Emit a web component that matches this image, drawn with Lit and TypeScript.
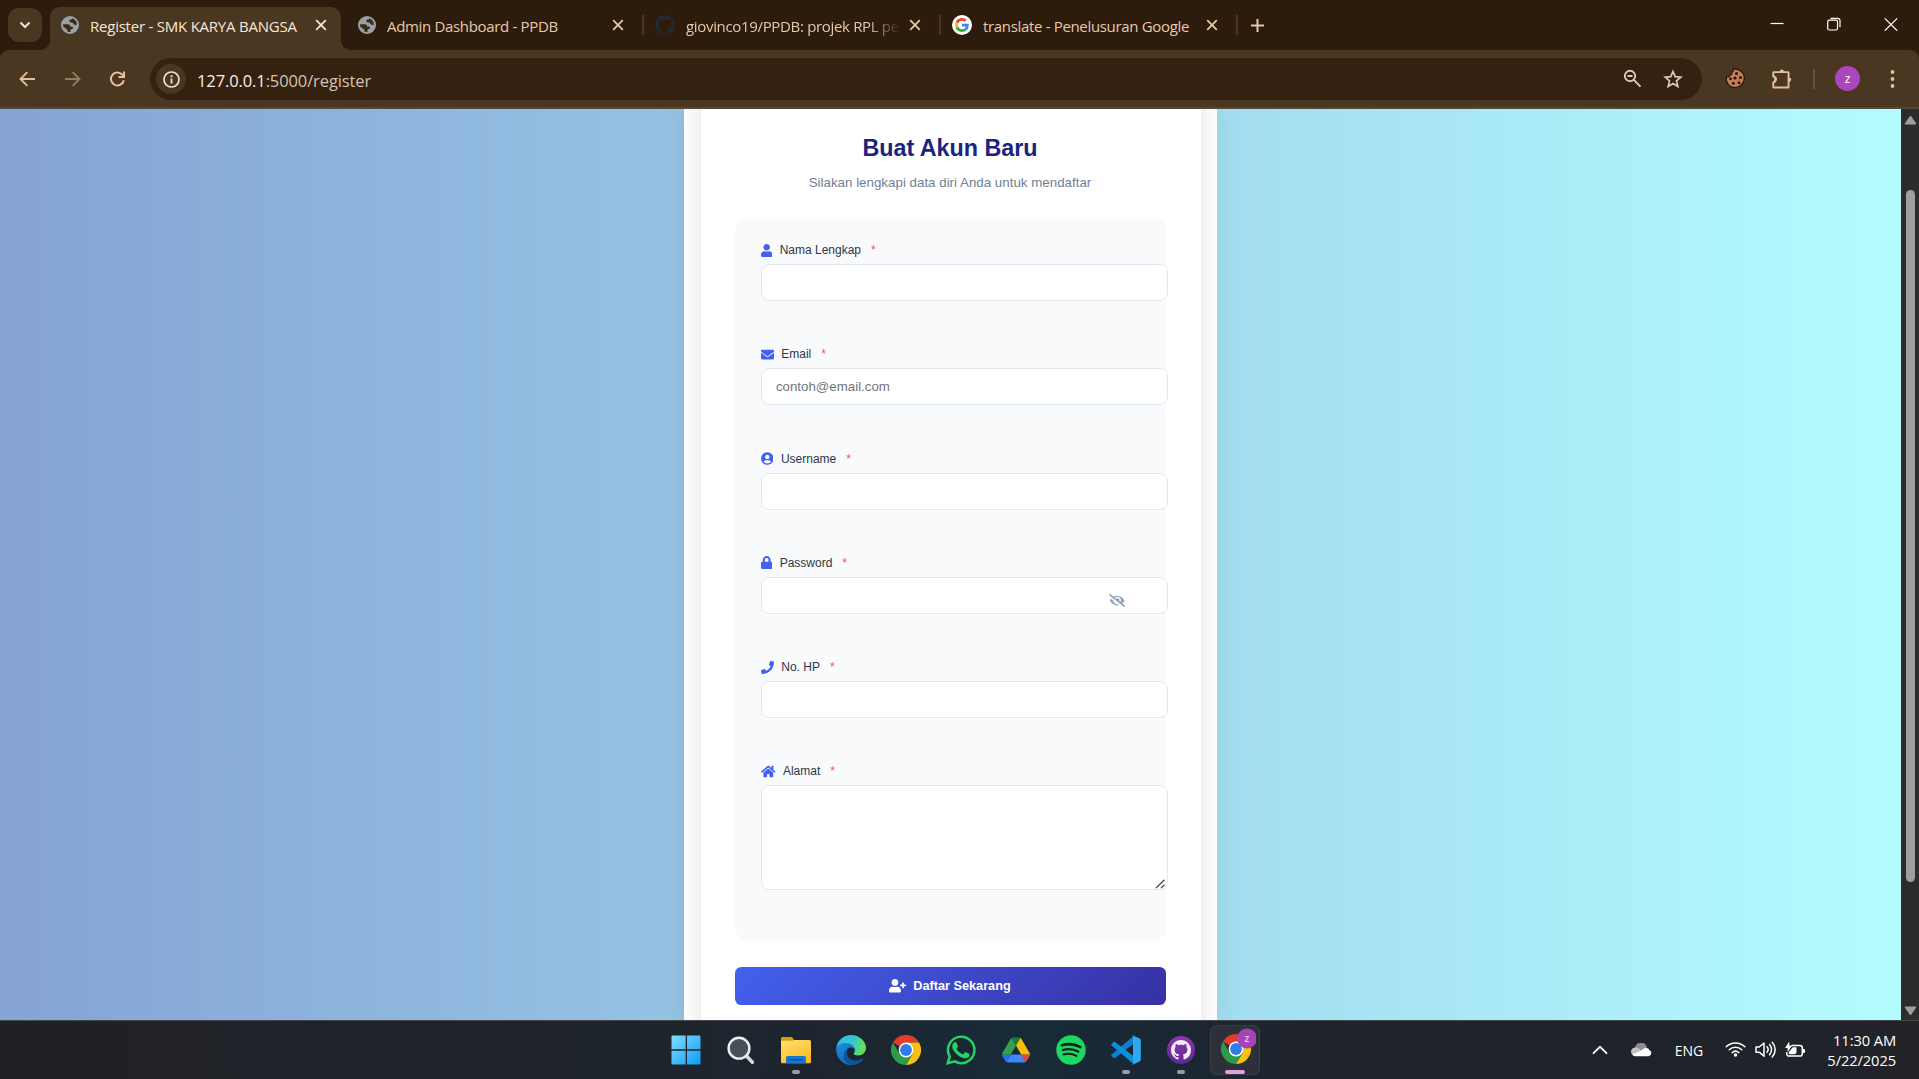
import { LitElement, html, svg, css } from "lit";
import { customElement } from "lit/decorators.js";

const fa = (name: string, h: number) => {
  const [w, d] = FA[name];
  return html`<svg class="fa" width=${(w / 512) * h} height=${h} viewBox="0 0 ${w} 512"><path fill="currentColor" d=${d}></path></svg>`;
};

const FA: Record<string, [number, string]> = {
  user: [448, "M224 256c70.7 0 128-57.3 128-128S294.7 0 224 0 96 57.3 96 128s57.3 128 128 128zm89.6 32h-16.7c-22.2 10.2-46.9 16-72.9 16s-50.6-5.8-72.9-16h-16.7C60.2 288 0 348.2 0 422.4V464c0 26.5 21.5 48 48 48h352c26.5 0 48-21.5 48-48v-41.6c0-74.2-60.2-134.4-134.4-134.4z"],
  envelope: [512, "M502.3 190.8c3.9-3.1 9.7-.2 9.7 4.7V400c0 26.5-21.5 48-48 48H48c-26.5 0-48-21.5-48-48V195.6c0-5 5.7-7.8 9.7-4.7 22.4 17.4 52.1 39.5 154.1 113.6 21.1 15.4 56.7 47.8 92.2 47.6 35.7.3 72-32.8 92.3-47.6 102-74.1 131.6-96.3 154-113.7zM256 320c23.2.4 56.6-29.2 73.4-41.4 132.7-96.3 142.8-104.7 173.4-128.7 5.8-4.5 9.2-11.5 9.2-18.9v-19c0-26.5-21.5-48-48-48H48c-26.5 0-48 21.5-48 48v19c0 7.4 3.4 14.3 9.2 18.9 30.6 23.9 40.7 32.4 173.4 128.7 16.8 12.2 50.2 41.8 73.4 41.4z"],
  circle: [496, "M248 8C111 8 0 119 0 256s111 248 248 248 248-111 248-248S385 8 248 8zm0 96c48.6 0 88 39.4 88 88s-39.4 88-88 88-88-39.4-88-88 39.4-88 88-88zm0 344c-58.7 0-111.3-26.6-146.5-68.2 18.8-35.4 55.6-59.8 98.5-59.8 2.4 0 4.8.4 7.1 1.1 13 4.2 26.6 6.9 40.9 6.9 14.3 0 28-2.7 40.9-6.9 2.3-.7 4.7-1.1 7.1-1.1 42.9 0 79.7 24.4 98.5 59.8C359.3 421.4 306.7 448 248 448z"],
  lock: [448, "M400 224h-24v-72C376 68.2 307.8 0 224 0S72 68.2 72 152v72H48c-26.5 0-48 21.5-48 48v192c0 26.5 21.5 48 48 48h352c26.5 0 48-21.5 48-48V272c0-26.5-21.5-48-48-48zm-104 0H152v-72c0-39.7 32.3-72 72-72s72 32.3 72 72v72z"],
  phone: [512, "M493.4 24.6l-104-24c-11.3-2.6-22.9 3.3-27.5 13.9l-48 112c-4.2 9.8-1.4 21.3 6.9 28l60.6 49.6c-36 76.7-98.9 140.5-177.2 177.2l-49.6-60.6c-6.8-8.3-18.2-11.1-28-6.9l-112 48C3.9 366.5-2 378.1.6 389.4l24 104C27.1 504.2 36.7 512 48 512c256.1 0 464-207.5 464-464 0-11.2-7.7-20.9-18.6-23.4z"],
  home: [576, "M280.37 148.26L96 300.11V464a16 16 0 0 0 16 16l112.06-.29a16 16 0 0 0 15.92-16V368a16 16 0 0 1 16-16h64a16 16 0 0 1 16 16v95.64a16 16 0 0 0 16 16.05L464 480a16 16 0 0 0 16-16V300L295.67 148.26a12.19 12.19 0 0 0-15.3 0zM571.6 251.47L488 182.56V44.05a12 12 0 0 0-12-12h-56a12 12 0 0 0-12 12v72.61L318.47 43a48 48 0 0 0-61 0L4.34 251.47a12 12 0 0 0-1.6 16.9l25.5 31A12 12 0 0 0 45.15 301l235.22-193.74a12.19 12.19 0 0 1 15.3 0L530.9 301a12 12 0 0 0 16.9-1.6l25.5-31a12 12 0 0 0-1.7-16.93z"],
  eyeSlash: [640, "M320 400c-75.85 0-137.25-58.71-142.9-133.11L72.2 185.82c-13.79 17.3-26.48 35.59-36.72 55.59a32.35 32.35 0 0 0 0 29.19C89.71 376.41 197.07 448 320 448c26.91 0 52.87-4 77.89-10.46L346 397.39a144.13 144.13 0 0 1-26 2.61zm313.82 58.1l-110.55-85.44a331.25 331.25 0 0 0 81.25-102.07 32.35 32.35 0 0 0 0-29.19C550.29 135.59 442.93 64 320 64a308.15 308.15 0 0 0-147.32 37.7L45.46 3.37A16 16 0 0 0 23 6.18L3.37 31.45A16 16 0 0 0 6.18 53.9l588.36 454.73a16 16 0 0 0 22.46-2.81l19.64-25.27a16 16 0 0 0-2.82-22.45zm-183.72-142l-39.3-30.38A94.75 94.75 0 0 0 416 256a94.76 94.76 0 0 0-121.31-92.21A47.65 47.65 0 0 1 304 192a46.64 46.64 0 0 1-1.54 10l-73.61-56.89A142.31 142.31 0 0 1 320 112a143.92 143.92 0 0 1 144 144c0 21.63-5.29 41.79-13.9 60.11z"],
  userPlus: [640, "M624 208h-64v-64c0-8.8-7.2-16-16-16h-32c-8.8 0-16 7.2-16 16v64h-64c-8.8 0-16 7.2-16 16v32c0 8.8 7.2 16 16 16h64v64c0 8.8 7.2 16 16 16h32c8.8 0 16-7.2 16-16v-64h64c8.8 0 16-7.2 16-16v-32c0-8.8-7.2-16-16-16zm-400 48c70.7 0 128-57.3 128-128S294.7 0 224 0 96 57.3 96 128s57.3 128 128 128zm89.6 32h-16.7c-22.2 10.2-46.9 16-72.9 16s-50.6-5.8-72.9-16h-16.7C60.2 288 0 348.2 0 422.4V464c0 26.5 21.5 48 48 48h352c26.5 0 48-21.5 48-48v-41.6c0-74.2-60.2-134.4-134.4-134.4z"],
};

const githubMark = "M8 0C3.58 0 0 3.58 0 8c0 3.54 2.29 6.53 5.47 7.59.4.07.55-.17.55-.38 0-.19-.01-.82-.01-1.49-2.01.37-2.53-.49-2.69-.94-.09-.23-.48-.94-.82-1.13-.28-.15-.68-.52-.01-.53.63-.01 1.08.58 1.23.82.72 1.21 1.87.87 2.33.66.07-.52.28-.87.51-1.07-1.78-.2-3.64-.89-3.64-3.95 0-.87.31-1.59.82-2.15-.08-.2-.36-1.02.08-2.12 0 0 .67-.21 2.2.82.64-.18 1.32-.27 2-.27s1.36.09 2 .27c1.53-1.04 2.2-.82 2.2-.82.44 1.1.16 1.92.08 2.12.51.56.82 1.27.82 2.15 0 3.07-1.87 3.75-3.65 3.95.29.25.54.73.54 1.48 0 1.07-.01 1.93-.01 2.2 0 .21.15.46.55.38A8.01 8.01 0 0 0 16 8c0-4.42-3.58-8-8-8z";

const globe = html`<svg width="18" height="18" viewBox="0 0 18 18"><circle cx="9" cy="9" r="9" fill="#9aa0a6"></circle><path fill="#3a2a1a" d="M2.200 8.300h4.600c1.500 0 2.300.8 2.300 2.100h1.700c1.500 0 1.500 2.100.2 2.600-1.300.4-1.600 1-1.600 2v1C5.400 16 2 13 2 9.200zM11.300 2.300c2.700 1 4.600 3.500 4.700 6.400h-1.800c-1 0-1.600-.4-2-1.300-.3-.8-.9-1-1.900-1-1.400 0-2-.5-2-1.400 0-1.100.7-1.600 1.900-1.600.8 0 1.200-.3 1.100-1.100z"></path><path fill="#9aa0a6" d="M2 10.200l4.300 3.600c.5.500.4 1.300 0 1.900C4 15 2 13 2 10.200z"></path></svg>`;
const github = html`<svg width="20" height="20" viewBox="0 0 16 16"><path fill="#24292f" d=${githubMark}></path></svg>`;
const google = html`<svg width="20" height="20" viewBox="0 0 20 20"><circle cx="10" cy="10" r="10" fill="#fff"></circle><g transform="translate(3 3) scale(.2917)"><path fill="#EA4335" d="M24 9.5c3.54 0 6.71 1.22 9.21 3.6l6.85-6.85C35.9 2.38 30.47 0 24 0 14.62 0 6.51 5.38 2.56 13.22l7.98 6.19C12.43 13.72 17.74 9.5 24 9.5z"></path><path fill="#4285F4" d="M46.98 24.55c0-1.57-.15-3.09-.38-4.55H24v9.02h12.94c-.58 2.96-2.26 5.48-4.78 7.18l7.73 6c4.51-4.18 7.09-10.36 7.09-17.65z"></path><path fill="#FBBC05" d="M10.53 28.59c-.48-1.45-.76-2.99-.76-4.59s.27-3.14.76-4.59l-7.98-6.19C.92 16.46 0 20.12 0 24c0 3.88.92 7.54 2.56 10.78l7.97-6.19z"></path><path fill="#34A853" d="M24 48c6.48 0 11.93-2.13 15.89-5.81l-7.73-6c-2.15 1.45-4.92 2.3-8.16 2.3-6.26 0-11.57-4.22-13.47-9.91l-7.98 6.19C6.51 42.62 14.62 48 24 48z"></path></g></svg>`;
const cross = html`<svg class="x" width="12" height="12" viewBox="0 0 12 12"><path fill="none" stroke="currentColor" stroke-width="1.8" d="M1.2 1.2l9.6 9.6M10.8 1.2l-9.6 9.6"></path></svg>`;

const chromeParts = svg`
  <path fill="#e33b2e" d="M15 15L2 7.5A15 15 0 0 1 28 7.5H15z"></path>
  <path fill="#f9c013" d="M28 7.5A15 15 0 0 1 15 30L21.5 18.7L15 7.5z"></path>
  <path fill="#2c9c4b" d="M2 7.5A15 15 0 0 0 15 30L21.5 18.8L8.5 18.8z"></path>
  <circle cx="15" cy="15" r="7.4" fill="#fff"></circle><circle cx="15" cy="15" r="5.9" fill="#2f7bea"></circle>`;

const taskIcons = {
  windows: html`<svg width="30" height="30" viewBox="0 0 30 30"><defs><linearGradient id="w" x1="0" y1="0" x2="1" y2="1"><stop offset="0" stop-color="#7fe0ff"></stop><stop offset="1" stop-color="#0f9bf5"></stop></linearGradient></defs><path fill="url(#w)" d="M1.5.5H15v14H.5v-13a1 1 0 0 1 1-1zM16 .5h12.500a1 1 0 0 1 1 1v13H16zM.5 15.500H15v14H1.500a1 1 0 0 1-1-1zM16 15.500h13.500v13a1 1 0 0 1-1 1H16z"></path><path stroke="#1d2733" d="M15.200 0v30M0 15h30"></path></svg>`,
  search: html`<svg width="30" height="30" viewBox="0 0 30 30"><path stroke="#d7d9db" stroke-width="3.6" stroke-linecap="round" d="M20 20.500l6.400 6.700"></path><circle cx="13" cy="13.200" r="10.400" fill="#48515a" stroke="#f0f1f2" stroke-width="2.400"></circle></svg>`,
  folder: html`<svg width="30" height="30" viewBox="0 0 30 30"><defs><linearGradient id="f" x1="0" y1="0" x2="0.600" y2="1"><stop offset="0" stop-color="#ffe070"></stop><stop offset="1" stop-color="#fcbc26"></stop></linearGradient></defs><path fill="#dc9a06" d="M0 8V3.500a1.500 1.500 0 0 1 1.500-1.500H9.800c1.200 0 1.700.500 2.300 1.400l.8 1.600V8z"></path><path fill="url(#f)" d="M0 5.800h10.500c1.500 0 2-.8 3-.8H28.500a1.500 1.500 0 0 1 1.500 1.500V27a1.200 1.200 0 0 1-1.200 1.200H1.200A1.200 1.200 0 0 1 0 27z"></path><path fill="#1579cf" d="M5 28.200V23a2 2 0 0 1 2-2h16a2 2 0 0 1 2 2v5.200z"></path><path stroke="#0a4a8c" stroke-width="1.200" d="M8.500 24.800h13"></path></svg>`,
  edge: html`<svg width="30" height="30" viewBox="0 0 30 30"><defs><linearGradient id="e1" x1="0" y1="0" x2="1" y2=".3"><stop offset="0" stop-color="#35b7ee"></stop><stop offset=".6" stop-color="#37c6d0"></stop><stop offset="1" stop-color="#63e05a"></stop></linearGradient><linearGradient id="e2" x1="0" y1="0" x2=".8" y2="1"><stop offset="0" stop-color="#1f8fdc"></stop><stop offset="1" stop-color="#0a63b8"></stop></linearGradient></defs><path fill="url(#e1)" d="M.4 12C1.800 5 7.800 0 15 0c8.700 0 15 6.500 15 12.800 0 4.800-3.600 7.700-8 7.700-2.500 0-4.300-.7-4.300-1.700 0-.8 1.200-1.300 1.200-3.600C18.900 12 15.500 9 10.500 9 5.500 9 2 10.500.4 12z"></path><path fill="url(#e2)" d="M.3 12C2.300 9.300 6 8 9.500 8c5.200 0 9.300 3 9.500 6.900-.6-1.500-2-2.500-4-2.500-3 0-5 2.700-5 6 0 5.300 4.500 9.500 10 10A15 15 0 0 1 15 30C6.500 30-.9 22 .3 12z"></path><path fill="#11539b" d="M11.500 14.200c-2 4.200.6 11.300 8 11.300 3.600 0 6-1.500 7-1.700.8-.1 1 .5.600 1.100A15 15 0 0 1 17 29.900C11 29.500 6.800 24.500 8 19c.5-2.200 1.900-4 3.500-4.800z"></path></svg>`,
  chrome: html`<svg width="30" height="30" viewBox="0 0 30 30">${chromeParts}</svg>`,
  whatsapp: html`<svg width="30" height="30" viewBox="0 0 30 30"><path fill="none" stroke="#25d366" stroke-width="2.500" d="M1.800 28.200l1.900-6.900A13.200 13.200 0 1 1 8.800 26.400z"></path><path fill="#25d366" d="M10.700 7.900c-.3-.7-.6-.7-1-.7h-.8c-.3 0-.8.100-1.200.6C7.300 8.200 6.200 9.300 6.200 11.400s1.500 4.100 1.700 4.400c.2.300 3 4.700 7.300 6.400 3.600 1.400 4.300 1.100 5.100 1 .8-.1 2.500-1 2.900-2s.4-1.900.3-2c-.1-.2-.4-.3-.9-.6s-2.500-1.300-2.900-1.400c-.4-.2-.7-.2-1 .2s-1.100 1.400-1.400 1.700c-.2.300-.5.300-.9.100-.4-.2-1.800-.7-3.400-2.100-1.300-1.100-2.100-2.500-2.400-2.900-.2-.4 0-.7.200-.9l.7-.8c.2-.3.300-.4.400-.7.100-.3.100-.5 0-.8-.1-.2-1-2.300-1.200-3.100z"></path></svg>`,
  drive: html`<svg width="28" height="26" viewBox="0 0 87.300 78"><path fill="#2a6ff0" d="M6.600 66.850l3.850 6.650c.8 1.400 1.950 2.500 3.300 3.300l13.750-23.800H0c0 1.550.4 3.100 1.200 4.500z"></path><path fill="#34a04e" d="M43.650 25L29.900 1.200c-1.350.8-2.500 1.900-3.300 3.300L1.200 48.500A9 9 0 0 0 0 53h27.500z"></path><path fill="#e8453c" d="M73.550 76.800c1.350-.8 2.500-1.900 3.300-3.300l1.600-2.750L86.100 57.500c.8-1.400 1.200-2.950 1.200-4.500H59.800l5.850 11.500z"></path><path fill="#1c7e34" d="M43.650 25L57.400 1.200C56.050.4 54.500 0 52.900 0H34.400c-1.600 0-3.150.45-4.500 1.200z"></path><path fill="#4285f4" d="M59.800 53H27.500L13.750 76.800c1.350.8 2.900 1.200 4.500 1.200h50.800c1.600 0 3.150-.45 4.500-1.200z"></path><path fill="#fbbc05" d="M73.400 26.500L60.700 4.500c-.8-1.400-1.950-2.500-3.300-3.300L43.650 25 59.800 53h27.450c0-1.550-.4-3.100-1.200-4.500z"></path></svg>`,
  spotify: html`<svg width="30" height="30" viewBox="0 0 30 30"><circle cx="15" cy="15" r="14.700" fill="#1ed760"></circle><g fill="none" stroke="#10201a" stroke-linecap="round"><path stroke-width="2.700" d="M6 10.200c6-1.700 13-1.200 18.300 1.900"></path><path stroke-width="2.200" d="M6.900 15c5-1.500 11-.9 15.500 1.700"></path><path stroke-width="1.900" d="M7.600 19.500c4.300-1.200 9.100-.8 13 1.500"></path></g></svg>`,
  vscode: html`<svg width="30" height="30" viewBox="0 0 30 30"><path fill="#0f7fd0" d="M.6 19.500a1.300 1.300 0 0 0 .1 1.800l1.700 1.500c.5.400 1.100.5 1.600.1L22 9.200V1.500z"></path><path fill="#0a8fdd" d="M.6 10.500a1.300 1.300 0 0 1 .1-1.800l1.700-1.500c.5-.4 1.100-.5 1.600-.1L22 20.800v7.700z"></path><path fill="#2fa8f4" d="M22 29.600c-.6.300-1.300.1-1.800-.400.6.600 1.800.100 1.800-.8V1.600c0-.9-1.200-1.400-1.800-.8.500-.5 1.200-.7 1.800-.4l6.700 3.200c.7.300 1.100 1 1.100 1.700v19.400c0 .7-.4 1.400-1.100 1.700z"></path></svg>`,
  github: html`<svg width="28" height="28" viewBox="0 0 28 28"><defs><linearGradient id="g" x1="0" y1="0" x2="0" y2="1"><stop offset="0" stop-color="#8f33b0"></stop><stop offset="1" stop-color="#5f2a97"></stop></linearGradient></defs><circle cx="14" cy="14" r="14" fill="url(#g)"></circle><g transform="translate(4 4) scale(1.250)"><path fill="#f4f0f8" d=${githubMark}></path></g></svg>`,
  active: html`<svg width="40" height="42" viewBox="0 0 40 42"><g transform="translate(5 6)">${chromeParts}</g><circle cx="31" cy="10.500" r="10" fill="#a544b4"></circle><text x="31" y="14.100" text-anchor="middle" font-family="Open Sans, sans-serif" font-size="10" font-weight="600" fill="#e4cdea">z</text></svg>`,
};

const fields = [
  { icon: "user", label: "Nama Lengkap", kind: "text" },
  { icon: "envelope", label: "Email", kind: "email", hint: "contoh@email.com" },
  { icon: "circle", label: "Username", kind: "text" },
  { icon: "lock", label: "Password", kind: "password" },
  { icon: "phone", label: "No. HP", kind: "tel" },
  { icon: "home", label: "Alamat", kind: "area" },
];

@customElement("browser-chrome")
export class BrowserChrome extends LitElement {
  static styles = css`
    :host { display: block; background: #2d1c0b; color: #e6c8ab; font-family: "Open Sans", sans-serif; font-stretch: 92%; }
    svg { display: block; flex: none; }
    .strip { height: 50px; display: flex; align-items: flex-start; }
    .drop { box-sizing: border-box; width: 34px; height: 34px; margin: 8px 8px 0; border-radius: 11px; background: #4a3722; color: #f2e2d2; display: grid; place-items: center; }
    .tab { box-sizing: border-box; width: 297px; height: 50px; padding: 0 15px 9px 11px; display: flex; align-items: center; font-size: 15px; }
    .tab .t { flex: 1; margin-left: 11px; white-space: nowrap; line-height: 22px; letter-spacing: -0.330px; padding-top: 1px; }
    .on .t { letter-spacing: -0.230px; }
    .inner { position: relative; z-index: 1; display: flex; align-items: center; width: 100%; margin-top: 9px; }
    .tab.on { position: relative; color: #f6e6d8; }
    .shape { position: absolute; left: -11px; top: 7px; }
    .fade .t { -webkit-mask-image: linear-gradient(90deg, #000 182px, transparent 214px); mask-image: linear-gradient(90deg, #000 182px, transparent 214px); }
    .inner .x { margin-right: 5px; }
    .sep { width: 2px; height: 20px; margin: 15px 0 0 -2px; background: #4a3722; }
    .cell { display: flex; }
    .plus { margin: 19px 0 0 13px; }
    .win { margin-left: auto; display: flex; color: #fff; gap: 43px; padding: 17px 21px 0 0; }
    .bar { height: 57px; background: #4a3722; display: flex; align-items: center; border-bottom: 2px solid #52473b; border-radius: 9px 9px 0 0; }
    .nav { display: flex; gap: 27px; padding-left: 18px; width: 132px; box-sizing: border-box; color: #e6c09c; }
    .dim { opacity: .5; }
    .omni { width: 1552px; box-sizing: border-box; height: 42px; margin-left: 18px; border-radius: 21px; background: #34210f; display: flex; align-items: center; padding: 0 19px 0 6px; color: #dccabb; margin-top: 1px; }
    .chip { width: 30px; height: 30px; border-radius: 50%; background: #4a3722; display: grid; place-items: center; color: #f0e0d2; }
    .url { margin-left: 11px; padding-top: 2px; font-size: 16.500px; letter-spacing: -0.110px; flex: 1; color: #d6c3b2; }
    .url b { font-weight: 400; color: #fbf0e6; }
    .find { display: flex; gap: 21px; }
    .ext { display: flex; align-items: center; padding-left: 23px; flex: 1; }
    .puz { margin-left: 25px; }
    .bar2 { width: 2px; height: 20px; background: #6a5036; margin-left: 21px; }
    .ava { width: 25px; height: 25px; border-radius: 50%; background: #ab47bc; color: #fff; display: grid; place-items: center; font-size: 12px; line-height: 12px; margin-left: 20px; }
    .dots { margin-left: 30px; }
  `;
  tab(icon: unknown, title: string, cls = "", sep = true) {
    return html`<div class="cell"><div class="tab ${cls}">
      ${cls === "on" ? html`<svg class="shape" width="314" height="43" viewBox="0 0 314 43"><path fill="#4a3722" d="M0 43c7 0 11-4 11-11V11C11 4 15 0 22 0H291c7 0 11 4 11 11V32c0 7 4 11 11 11z"></path></svg>` : ""}
      <div class="inner">${icon}<span class="t">${title}</span>${cross}</div></div>${sep ? html`<div class="sep"></div>` : ""}</div>`;
  }
  render() {
    return html`
      <div class="strip">
        <div class="drop"><svg width="12" height="12" viewBox="0 0 12 12"><path fill="none" stroke="currentColor" stroke-width="2" d="M1.500 3.500L6 8l4.500-4.500"></path></svg></div>
        ${this.tab(globe, "Register - SMK KARYA BANGSA", "on", false)}
        ${this.tab(globe, "Admin Dashboard - PPDB")}
        ${this.tab(github, "giovinco19/PPDB: projek RPL pe", "fade")}
        ${this.tab(google, "translate - Penelusuran Google")}
        <svg class="plus" width="13" height="13" viewBox="0 0 13 13"><path stroke="currentColor" stroke-width="2" d="M6.500 0v13M0 6.500h13"></path></svg>
        <div class="win">
          <svg width="14" height="14" viewBox="0 0 14 14"><path stroke="currentColor" stroke-width="1.200" d="M.500 6.500h13"></path></svg>
          <svg width="14" height="14" viewBox="0 0 14 14"><rect x=".7" y="3.200" width="9.800" height="9.800" rx="1.500" fill="none" stroke="currentColor" stroke-width="1.200"></rect><path fill="none" stroke="currentColor" stroke-width="1.200" d="M3.500 1.300h7a2.500 2.500 0 0 1 2.500 2.500v6.500"></path></svg>
          <svg width="14" height="14" viewBox="0 0 14 14"><path stroke="currentColor" stroke-width="1.200" d="M.8 1.300l12.400 12.400M13.200 1.300L.8 13.700"></path></svg>
        </div>
      </div>
      <div class="bar">
        <div class="nav">
          <svg width="18" height="18" viewBox="0 0 18 18"><path fill="none" stroke="currentColor" stroke-width="1.900" d="M17 9H3M9.300 2.200L2.500 9l6.800 6.800"></path></svg>
          <svg class="dim" width="18" height="18" viewBox="0 0 18 18"><path fill="none" stroke="currentColor" stroke-width="1.900" d="M2 9h14M9.700 2.200L16.500 9l-6.800 6.800"></path></svg>
          <svg width="18" height="18" viewBox="0 0 18 18"><path fill="none" stroke="currentColor" stroke-width="2" d="M15.800 10.200A6.500 6.500 0 1 1 14.300 4.600L16 6.300"></path><path fill="currentColor" d="M17 1.500V8H10.500V6.100h4.600V1.500z"></path></svg>
        </div>
        <div class="omni">
          <div class="chip"><svg width="17" height="17" viewBox="0 0 17 17"><circle cx="8.500" cy="8.500" r="7.500" fill="none" stroke="currentColor" stroke-width="1.700"></circle><path stroke="currentColor" stroke-width="1.800" d="M8.500 7.500v5M8.500 4.300v1.900"></path></svg></div>
          <div class="url"><b>127.0.0.1</b>:5000/register</div>
          <div class="find">
            <svg width="19" height="19" viewBox="0 0 19 19"><g fill="none" stroke="currentColor" stroke-width="1.900"><circle cx="7" cy="7" r="5.200"></circle><path d="M10.800 10.800l6.700 6.900M4.500 7h5"></path></g></svg>
            <svg width="20" height="20" viewBox="0 0 20 20"><path fill="none" stroke="currentColor" stroke-width="1.700" d="M10 2.500l2.200 5.200 5.600.5-4.300 3.700 1.300 5.500L10 14.500l-4.800 2.900 1.300-5.500L2.200 8.200l5.600-.5z"></path></svg>
          </div>
        </div>
        <div class="ext">
          <svg width="21" height="21" viewBox="0 0 21 21"><path fill="#c67f54" stroke="#23160d" stroke-width="1.200" d="M8 1.200c.5 1.800.2 2.700-1.200 3.300.2 1.600-.6 2.600-2 2.700.2 1.300-1.700 2-3.200 1.300-1.500 5.500 2.500 11 8.400 11 5.500 0 9.300-4.200 9.300-9.500C19.300 4.500 14 .3 8 1.200z"></path><g fill="#23160d"><circle cx="11.500" cy="5.500" r="1.500"></circle><circle cx="15.500" cy="9.500" r="1.500"></circle><circle cx="10" cy="10" r="1.600"></circle><circle cx="5.500" cy="10.800" r="1.400"></circle><circle cx="14" cy="14.800" r="1.500"></circle><circle cx="8.300" cy="15.300" r="1.500"></circle></g></svg>
          <svg class="puz" width="21" height="21" viewBox="0 0 21 21"><path fill="#e6c09c" d="M8.700 3.200a2.200 2.200 0 0 1 4.300 0H17c.9 0 1.500.6 1.500 1.500v4.700a2.200 2.200 0 0 1 0 4.300V19c0 .9-.6 1.500-1.500 1.500H2.800c-.9 0-1.500-.6-1.500-1.500v-5.300c2.600-.4 2.600-4.200 0-4.600V4.700c0-.9.600-1.500 1.500-1.500z"></path><path fill="#4a3722" d="M3.200 5.100h13.400v13.500H3.200v-3.400c3.700-1.500 3.700-6.200 0-7.700z"></path></svg>
          <div class="bar2"></div>
          <div class="ava">z</div>
          <svg class="dots" width="5" height="20" viewBox="0 0 5 20"><g fill="#e6c09c"><circle cx="2.500" cy="3" r="1.900"></circle><circle cx="2.500" cy="10" r="1.900"></circle><circle cx="2.500" cy="17" r="1.900"></circle></g></svg>
        </div>
      </div>`;
  }
}

@customElement("register-page")
export class RegisterPage extends LitElement {
  static styles = css`
    :host { display: flex; overflow: hidden; font-family: "Liberation Sans", Arial, sans-serif; }
    .view { flex: 1; height: 911px; overflow: hidden; display: flex; justify-content: center; background: linear-gradient(90deg, #85a3d5 0%, #b4fcff 100%); }
    .outer { width: 533px; background: #fff; overflow: hidden; display: flex; justify-content: center; box-shadow: 0 0 24px rgba(0, 0, 0, .08); }
    .card { box-sizing: border-box; width: 500px; height: 1100px; margin-top: -60px; padding: 85px 35px 0 34px; background: #fff; box-shadow: 0 8px 24px rgba(0, 0, 0, .12); }
    h1 { margin: 0; text-align: center; font-size: 23.300px; line-height: 28px; color: #1a237e; }
    .sub { margin: 12px 0 0; text-align: center; font-size: 13.350px; line-height: 18px; color: #718096; }
    .box { box-sizing: border-box; height: 724px; margin-top: 25px; border-radius: 13px; background: #f8fafc; padding: 25px 0 0 26.400px; }
    .field { height: 104.300px; position: relative; }
    .lab { display: flex; align-items: center; height: 16px; font-size: 12px; color: #2d3748; }
    .lab .fa { color: #4361ee; margin-right: 7.400px; }
    .star { color: #f0555a; margin-left: 10px; }
    input, textarea { display: block; box-sizing: border-box; width: 407px; height: 37px; margin: 6px 0 0; padding: 0 14px; border: 1px solid #e2e8f0; border-radius: 8px; background: #fff; font: 13.300px "Liberation Sans", Arial, sans-serif; outline: none; }
    textarea { height: 105px; resize: none; }
    .grip { position: absolute; left: 394px; top: 116px; }
    input::placeholder { color: #757575; }
    .eye { position: absolute; left: 348px; top: 39px; color: #94a3b8; }
    .eye svg, .btn svg { display: block; }
    .btn { width: 100%; height: 38px; margin-top: 26px; border: 0; border-radius: 6.400px; display: flex; align-items: center; justify-content: center; gap: 7px; color: #fff; font: 700 12.700px "Liberation Sans", Arial, sans-serif; background: linear-gradient(135deg, #4361ee, #3730a3); }
    .scroll { width: 18px; background: #2c2c2c; display: flex; flex-direction: column; align-items: center; justify-content: space-between; padding: 6px 0 4px; box-sizing: border-box; }
    .scroll svg { margin-left: 1px; }
    .thumb { width: 9px; height: 692px; border-radius: 5px; background: #9f9f9f; margin: 65px 0 auto; }
  `;
  render() {
    return html`
      <div class="view"><div class="outer"><div class="card">
        <h1>Buat Akun Baru</h1>
        <p class="sub">Silakan lengkapi data diri Anda untuk mendaftar</p>
        <div class="box">
          ${fields.map((f) => html`<div class="field">
            <label class="lab">${fa(f.icon, 13)}<span>${f.label}</span><span class="star">*</span></label>
            ${f.kind === "area" ? html`<textarea></textarea><svg class="grip" width="11" height="10" viewBox="0 0 11 10"><path stroke="#4a4a4a" stroke-width="1.300" d="M1 9L9.500.800M6 9L9.500 5.800"></path></svg>` : html`<input type=${f.kind} placeholder=${f.hint ?? ""} />`}
            ${f.kind === "password" ? html`<span class="eye">${fa("eyeSlash", 13)}</span>` : ""}
          </div>`)}
        </div>
        <button class="btn">${fa("userPlus", 13.600)}<span>Daftar Sekarang</span></button>
      </div></div></div>
      <div class="scroll">
        <svg width="13" height="10" viewBox="0 0 13 10"><path fill="#9f9f9f" stroke="#9f9f9f" stroke-linejoin="round" d="M6.500 1L12 9H1z"></path></svg>
        <div class="thumb"></div>
        <svg width="13" height="10" viewBox="0 0 13 10"><path fill="#9f9f9f" stroke="#9f9f9f" stroke-linejoin="round" d="M6.500 9L12 1H1z"></path></svg>
      </div>`;
  }
}

@customElement("task-bar")
export class TaskBar extends LitElement {
  static styles = css`
    :host { box-sizing: border-box; height: 59px; border-top: 1px solid #46494e; padding-left: 2px; display: grid; grid-template-columns: 1fr auto 1fr; align-items: center; background: linear-gradient(90deg, #202127 0%, #1e2329 28%, #1c2630 45%, #162b38 53%, #1b2632 62%, #202229 70%, #212329 100%); color: #fff; font-family: "Open Sans", sans-serif; font-stretch: 92%; }
    .apps { grid-column: 2; display: flex; }
    .app { position: relative; width: 55px; height: 58px; display: grid; place-items: center; }
    .hot { position: absolute; left: 2px; top: 4px; width: 50px; height: 50px; box-sizing: border-box; border: 1px solid #383d46; border-radius: 6px; background: #2b3039; }
    .app svg { position: relative; display: block; }
    .app.act svg { margin-bottom: 2px; }
    .run { position: absolute; left: 24px; bottom: 5px; width: 8px; height: 4px; border-radius: 2px; background: #9b9da1; }
    .act .run { left: 17px; width: 20px; background: #dda0e2; }
    .tray { display: flex; align-items: center; justify-content: flex-end; padding-right: 23px; font-size: 14px; letter-spacing: -.1px; }
    .tray svg { display: block; }
    .eng { margin: 0 22px 0 23px; }
    .sys { display: flex; gap: 9px; margin-right: 18px; }
    .cloud { margin-left: 23px; }
    .clock { text-align: right; font-size: 14.700px; line-height: 20px; width: 72px; white-space: nowrap; }
  `;
  app(icon: unknown, run = false) {
    return html`<div class="app">${icon}${run ? html`<i class="run"></i>` : ""}</div>`;
  }
  render() {
    const t = taskIcons;
    return html`
      <div class="apps">
        ${this.app(t.windows)}${this.app(t.search)}${this.app(t.folder, true)}${this.app(t.edge)}${this.app(t.chrome)}${this.app(t.whatsapp)}${this.app(t.drive)}${this.app(t.spotify)}${this.app(t.vscode, true)}${this.app(t.github, true)}
        <div class="app act"><i class="hot"></i>${t.active}<i class="run"></i></div>
      </div>
      <div class="tray">
        <svg width="16" height="10" viewBox="0 0 16 10"><path fill="none" stroke="#fff" stroke-width="1.800" stroke-linecap="round" d="M1.500 8.200L8 1.800l6.500 6.400"></path></svg>
        <svg class="cloud" width="21" height="14" viewBox="0 0 21 14"><path fill="#8c8c8f" d="M4 6a6 6 0 0 1 12-1l-3 3z"></path><path fill="#c3c3c5" d="M4 13A4.200 4.200 0 0 1 4.500 4.500c2-.2 3.500 1 5.500 2.800L15 12z"></path><path fill="#fff" d="M1.500 11.500C3 10.500 9 9 12 6c3-2 6-1 6.200 1 2.800.8 3 5.500-.7 6.200H4c-1 0-2-.7-2.500-1.700z"></path></svg>
        <span class="eng">ENG</span>
        <div class="sys">
          <svg width="21" height="16" viewBox="0 0 21 16"><g fill="none" stroke="#fff" stroke-width="1.500" stroke-linecap="round"><path d="M1.200 5.800a13 13 0 0 1 18.600 0M4.200 8.800a9 9 0 0 1 12.600 0M7.200 11.600a5 5 0 0 1 6.600 0"></path></g><circle cx="10.500" cy="14" r="1.700" fill="#fff"></circle></svg>
          <svg width="21" height="17" viewBox="0 0 21 17"><g fill="none" stroke="#fff" stroke-width="1.500" stroke-linecap="round" stroke-linejoin="round"><path d="M1 6v5.200h3.200L9 15.200V2L4.200 6zM12 5.800c1.300 1.500 1.300 4 0 5.500M14.600 3.500c2.600 2.900 2.600 7.200 0 10.200M17.200 1.200c4 4.300 4 10.500 0 14.800"></path></g></svg>
          <svg width="21" height="18" viewBox="0 0 21 18"><path fill="none" stroke="#fff" stroke-width="1.500" d="M6.500 4.500H15a2.300 2.300 0 0 1 2.300 2.300v6a2.300 2.300 0 0 1-2.300 2.300H4a2.300 2.300 0 0 1-2.300-2.300V11"></path><path fill="#fff" d="M18 8h1.300c1 0 1 4 0 4H18zM3.800 13.300V11l4-4.800h3.700v5.500l-1.600 1.600zM4.300.5v4h2.900L2.600 11V7H0z"></path></svg>
        </div>
        <div class="clock">11:30 AM<br />5/22/2025</div>
      </div>`;
  }
}

@customElement("app-root")
export class AppRoot extends LitElement {
  static styles = css`
    :host { display: flex; flex-direction: column; width: 1919px; height: 1079px; overflow: hidden; }
  `;
  render() {
    return html`<browser-chrome></browser-chrome><register-page></register-page><task-bar></task-bar>`;
  }
}
